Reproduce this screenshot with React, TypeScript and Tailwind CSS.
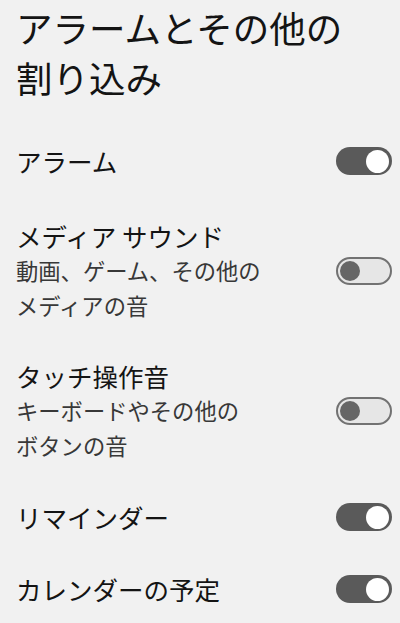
const font = { fontFamily: '"Noto Sans CJK JP", "Noto Sans", sans-serif' };

type Item = {
  title: string;
  lines?: string[];
  on: boolean;
  pad: string;
};

const items: Item[] = [
  { title: "アラーム", on: true, pad: "pt-[18px] pb-[18px]" },
  {
    title: "メディア サウンド",
    lines: ["動画、ゲーム、その他の", "メディアの音"],
    on: false,
    pad: "pt-[22px] pb-[18px]",
  },
  {
    title: "タッチ操作音",
    lines: ["キーボードやその他の", "ボタンの音"],
    on: false,
    pad: "pt-[18px] pb-[18px]",
  },
  { title: "リマインダー", on: true, pad: "pt-[18px] pb-[18px]" },
  { title: "カレンダーの予定", on: true, pad: "pt-[18px] pb-[18px]" },
];

function Toggle({ on }: { on: boolean }) {
  if (on) {
    return (
      <div className="w-[56px] h-[28px] rounded-full bg-[#5a5a5a] flex items-center justify-end pr-[3px] shrink-0">
        <div className="w-[23px] h-[23px] rounded-full bg-white" />
      </div>
    );
  }
  return (
    <div className="w-[56px] h-[28px] rounded-full bg-[#e6e6e6] border-2 border-[#727272] flex items-center pl-[2px] shrink-0">
      <div className="w-[20px] h-[20px] rounded-full bg-[#666666]" />
    </div>
  );
}

export default function App() {
  return (
    <div className="w-[400px] h-[623px] bg-[#f1f1f1] overflow-hidden" style={font}>
      <h1 className="pl-[16px] pt-[3px] pb-[22px] text-[36.5px] leading-[50px] text-[#141414] font-normal">
        アラームとその他の
        <br />
        割り込み
      </h1>
      {items.map((it) => (
        <div key={it.title} className={`flex items-center pl-[16px] pr-[8px] ${it.pad}`}>
          <div className="flex-1">
            <div className={`text-[25.5px] text-[#141414] ${it.lines ? "leading-[34px]" : "leading-[36px]"}`}>
              {it.title}
            </div>
            {it.lines &&
              it.lines.map((l) => (
                <div key={l} className="text-[22.3px] leading-[35px] text-[#383838]">
                  {l}
                </div>
              ))}
          </div>
          <Toggle on={it.on} />
        </div>
      ))}
    </div>
  );
}
